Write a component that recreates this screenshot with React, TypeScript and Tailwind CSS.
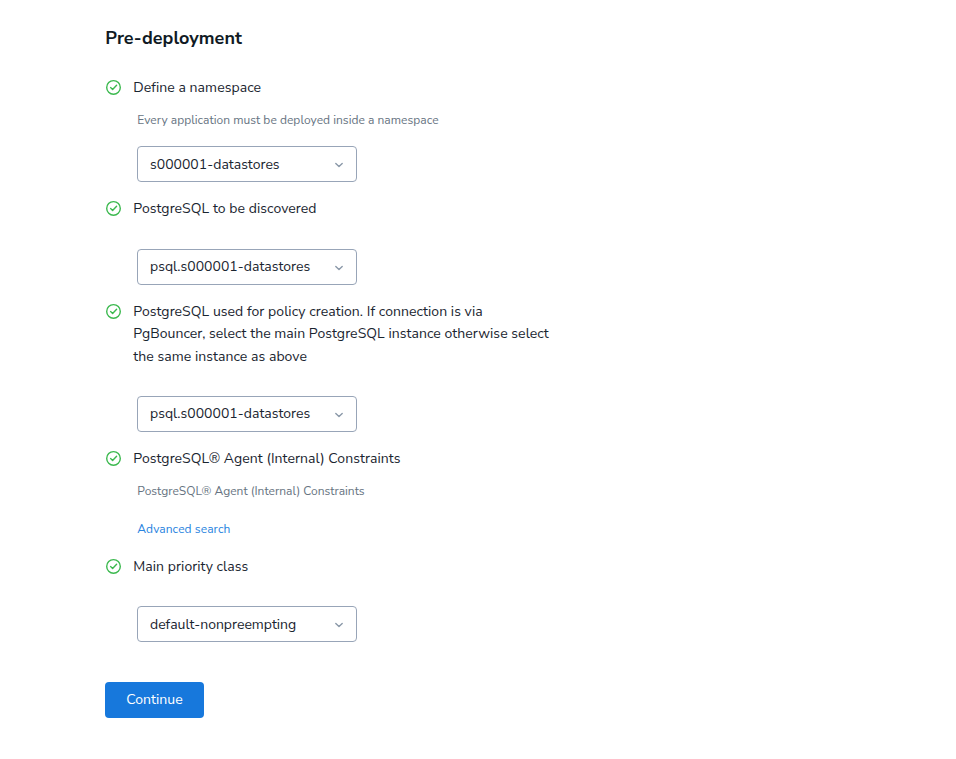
import type { ReactNode } from "react";

function CheckCircle() {
  return (
    <svg viewBox="0 0 17 17" className="size-[17px] shrink-0 mt-[2px]" fill="none" stroke="#3cb94f">
      <circle cx="8.5" cy="8.4" r="6.8" strokeWidth="1.4" />
      <path d="M5.6 8.6 7.6 10.4 11.6 6.2" strokeWidth="1.4" strokeLinecap="round" strokeLinejoin="round" />
    </svg>
  );
}

function Select({ value, raised = false }: { value: string; raised?: boolean }) {
  return (
    <button
      type="button"
      className="flex h-9 w-[220px] items-center justify-between rounded-[4px] border border-[#98a5b8] bg-white pl-3 pr-3 text-sm text-[#1a2530]"
    >
      <span className={raised ? "-mt-px" : "mt-px"}>{value}</span>
      <svg viewBox="0 0 10 10" className="size-[10px] mt-[2px]" fill="none" stroke="#8a98a8">
        <path d="M1.8 3.5 5 6.5 8.2 3.5" strokeWidth="1.4" strokeLinecap="round" strokeLinejoin="round" />
      </svg>
    </button>
  );
}

function Step({ title, children }: { title: string; children: ReactNode }) {
  return (
    <section>
      <div className="flex gap-[11.3px]">
        <CheckCircle />
        <h2 className="w-[420px] text-sm leading-[22.4px] tracking-[0.06px] text-[#1a2530]">{title}</h2>
      </div>
      <div className="pl-8">{children}</div>
    </section>
  );
}

export default function App() {
  return (
    <main className="min-h-[759px] bg-white pl-[105px] pt-6 font-['Nunito_Sans','Nunito','Open_Sans',sans-serif]">
      <h1 className="pl-[0.3px] text-lg font-bold leading-7 tracking-[0.03px] text-[#101a24]">Pre-deployment</h1>
      <div className="mt-[25px] flex flex-col gap-4">
        <Step title="Define a namespace">
          <p className="mt-3 mb-[15.6px] pl-[0.3px] text-xs leading-[19px] tracking-[0.03px] text-[#677482]">
            Every application must be deployed inside a namespace
          </p>
          <Select value="s000001-datastores" />
        </Step>
        <Step title="PostgreSQL to be discovered">
          <div className="mt-[28.6px]">
            <Select value="psql.s000001-datastores" raised />
          </div>
        </Step>
        <Step title="PostgreSQL used for policy creation. If connection is via PgBouncer, select the main PostgreSQL instance otherwise select the same instance as above">
          <div className="mt-[27.8px]">
            <Select value="psql.s000001-datastores" raised />
          </div>
        </Step>
        <Step title="PostgreSQL® Agent (Internal) Constraints">
          <p className="mt-3 pl-[0.3px] text-xs leading-[19px] tracking-[0.01px] text-[#677482]">PostgreSQL® Agent (Internal) Constraints</p>
          <a href="#" className="mt-[19px] mb-px block pl-[0.3px] text-xs leading-[19px] tracking-[0.08px] text-[#2a84e0]">
            Advanced search
          </a>
        </Step>
        <Step title="Main priority class">
          <div className="mt-[27.2px]">
            <Select value="default-nonpreempting" />
          </div>
        </Step>
      </div>
      <button type="button" className="mt-10 flex h-9 w-[99px] items-center justify-center rounded-[4px] bg-[#1778dc] pb-px text-sm tracking-[0.05px] text-white">
        Continue
      </button>
    </main>
  );
}
